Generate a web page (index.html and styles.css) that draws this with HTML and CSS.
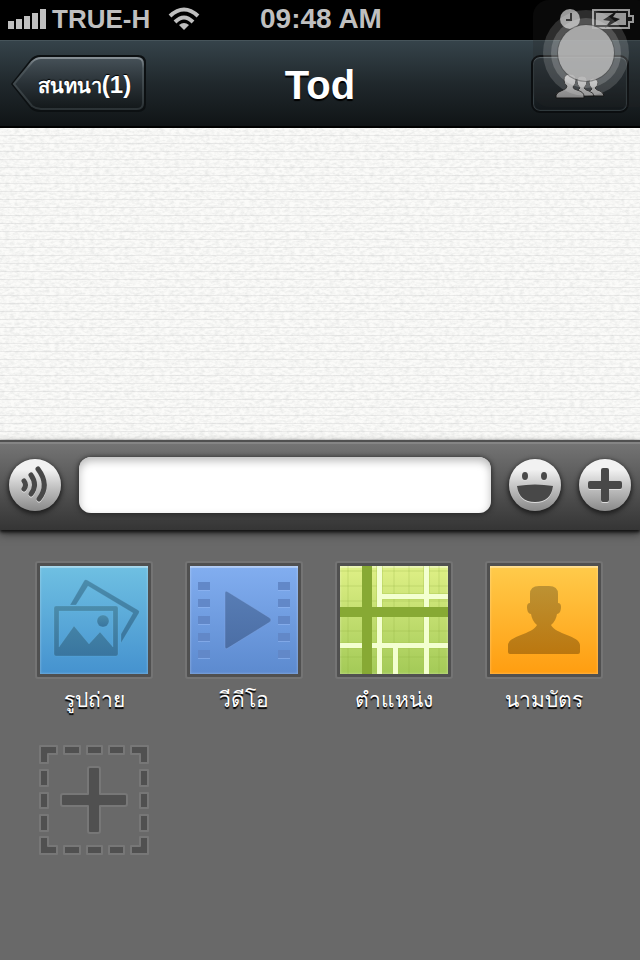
FILE: index.html
```
<!DOCTYPE html>
<html lang="th">
<head>
    <meta charset="UTF-8">
    <meta name="viewport" content="width=device-width, initial-scale=1.0">
    <title>Tod</title>
    <link rel="stylesheet" href="styles.css">
</head>
<body>
    <div class="status">
        <div class="status-left">
            <svg width="38" height="20" viewBox="0 0 38 20" fill="#bfbfbf">
                <path d="M0 12h6v8H0zM8 10h6v10H8zM16 7h6v13h-6zM24 4h6v16h-6zM32 0h6v20h-6z"/>
            </svg>
            <span class="carrier">TRUE-H</span>
            <svg class="wifi" width="32" height="24" viewBox="0 0 32 24" fill="none" stroke="#bfbfbf" stroke-width="4">
                <path d="M2 9Q16-4 30 9"/>
                <path d="M7 15Q16 6 25 15"/>
                <path d="M11 18Q16 14 21 18L16 23Z" fill="#bfbfbf" stroke="none"/>
            </svg>
        </div>
        <span class="time">09:48 AM</span>
        <div class="status-right">
            <svg width="20" height="20" viewBox="0 0 20 20">
                <circle cx="10" cy="10" r="10" fill="#bfbfbf"/>
                <path d="M11 4V11H6" fill="none" stroke="#111" stroke-width="2"/>
            </svg>
            <svg width="42" height="20" viewBox="0 0 42 20">
                <path d="M1 1H37V7H41V13H37V19H1Z" fill="#111" stroke="#bfbfbf" stroke-width="2"/>
                <path d="M4 4H34V16H4Z" fill="#bfbfbf"/>
                <path d="M26 1L11 11L18 12L13 19L28 10L21 8Z" fill="#111"/>
            </svg>
        </div>
    </div>

    <header class="header">
        <button class="back" type="button">
            <svg class="back-shape" width="135" height="58" viewBox="0 0 135 58">
                <defs>
                    <linearGradient id="backFill" x1="0" y1="0" x2="0" y2="1">
                        <stop offset="0" stop-color="#465158"/>
                        <stop offset="0.5" stop-color="#293136"/>
                        <stop offset="1" stop-color="#13181a"/>
                    </linearGradient>
                    <linearGradient id="backEdge" x1="0" y1="0" x2="0" y2="1">
                        <stop offset="0" stop-color="#879096"/>
                        <stop offset="0.2" stop-color="#4c565b"/>
                        <stop offset="1" stop-color="#2b3235"/>
                    </linearGradient>
                </defs>
                <path d="M0 29L19 5Q23 0 29 0H127Q135 0 135 8V49Q135 57 127 57H29Q23 57 19 53Z" fill="#0c1012"/>
                <path d="M3 29L21 7Q25 3 30 3H126Q132 3 132 9V48Q132 54 126 54H30Q25 54 21 51Z" fill="url(#backFill)" stroke="url(#backEdge)" stroke-width="2"/>
            </svg>
            <span class="back-text">สนทนา<span class="count">(1)</span></span>
        </button>
        <h1>Tod</h1>
        <button class="members" type="button" aria-label="สมาชิก">
            <svg width="50" height="26" viewBox="0 0 50 26">
                <defs>
                    <linearGradient id="person" x1="0" y1="0" x2="0" y2="1">
                        <stop offset="0" stop-color="#eee"/>
                        <stop offset="1" stop-color="#a5a5a5"/>
                    </linearGradient>
                </defs>
                <g fill="url(#person)" stroke="#111" stroke-width="1">
                    <path d="M33 23V20L37 16Q34 13 34 9Q34 5 38 5T43 9Q43 13 40 15Q41 17 45 18Q49 20 49 23Z"/>
                    <path d="M20 23V20L25 15Q22 12 22 8Q22 3 27 3T32 8Q32 12 29 15Q30 17 34 18Q39 20 39 23Z"/>
                    <path d="M1 25V22Q2 19 8 17Q12 16 12 13Q9 11 9 7Q9 1 15 1T21 7Q21 11 18 14Q18 16 22 17Q29 19 29 23V25Z"/>
                </g>
            </svg>
        </button>
    </header>

    <main class="chat">
        <svg class="paper" width="100%" height="100%">
            <filter id="grain" x="0" y="0" width="100%" height="100%">
                <feTurbulence type="fractalNoise" baseFrequency="0.2 0.4" numOctaves="4" seed="4"/>
                <feColorMatrix values="0 0 0 0 0.45  0 0 0 0 0.47  0 0 0 0 0.47  0.5 0 0 0 -0.18"/>
            </filter>
            <rect width="100%" height="100%" filter="url(#grain)"/>
        </svg>
    </main>

    <form class="toolbar">
        <button class="round" type="button" aria-label="เสียง">
            <svg width="52" height="52" viewBox="0 0 52 52" fill="none" stroke="#484848" stroke-width="5" stroke-linecap="round">
                <path d="M15 22Q18 26 15 30"/>
                <path d="M22 16Q29 26 22 35"/>
                <path d="M29 10Q41 26 30 40"/>
            </svg>
        </button>
        <input class="message" type="text" aria-label="ข้อความ">
        <button class="round" type="button" aria-label="อีโมติคอน">
            <svg width="52" height="52" viewBox="0 0 52 52" fill="#484848">
                <ellipse cx="16" cy="17" rx="3" ry="4"/>
                <ellipse cx="35" cy="17" rx="3" ry="4"/>
                <path d="M8 27Q26 24 44 27Q42 43 26 43T8 27Z"/>
            </svg>
        </button>
        <button class="round" type="button" aria-label="เพิ่ม">
            <svg width="52" height="52" viewBox="0 0 52 52" fill="#484848">
                <path d="M24 9H28Q30 9 30 11V22H41Q43 22 43 24V28Q43 30 41 30H30V41Q30 43 28 43H24Q22 43 22 41V30H11Q9 30 9 28V24Q9 22 11 22H22V11Q22 9 24 9Z"/>
            </svg>
        </button>
    </form>

    <section class="panel">
        <button class="item" type="button">
            <span class="tile photo">
                <svg width="108" height="108" viewBox="5 5 108 108">
                    <defs>
                        <linearGradient id="photoInk" x1="0" y1="0" x2="0" y2="1">
                            <stop offset="0" stop-color="#4b8cab"/>
                            <stop offset="1" stop-color="#39759f"/>
                        </linearGradient>
                    </defs>
                    <g fill="url(#photoInk)" stroke="#75bce4" stroke-opacity="0.2">
                        <path d="M35 44L49 20Q50 18 52 19L103 49Q105 50 104 52L86 82V73L98 52L53 25L41 44Z"/>
                        <path fill-rule="evenodd" d="M21 45H81Q83 45 83 47V93Q83 95 81 95H21Q19 95 19 93V47Q19 45 21 45ZM24 50V86L39 65L54 83L65 71L78 86V50Z"/>
                        <circle cx="68" cy="60" r="6"/>
                    </g>
                </svg>
            </span>
            <span class="label">รูปถ่าย</span>
        </button>
        <button class="item" type="button">
            <span class="tile video">
                <svg width="108" height="108" viewBox="5 5 108 108">
                    <defs>
                        <linearGradient id="videoInk" x1="0" y1="0" x2="0" y2="1">
                            <stop offset="0" stop-color="#587db5"/>
                            <stop offset="1" stop-color="#4b6ea5"/>
                        </linearGradient>
                    </defs>
                    <path d="M40 32Q40 29 43 31L85 57Q87 59 85 61L43 87Q40 89 40 86Z" fill="url(#videoInk)" stroke="#86acec" stroke-opacity="0.4"/>
                    <path d="M19 22V99M99 22V99" fill="none" stroke="#9abcf5" stroke-opacity="0.5" stroke-width="12" stroke-dasharray="8 9"/>
                    <path d="M19 21V98M99 21V98" fill="none" stroke="#6288c8" stroke-width="12" stroke-dasharray="8 9"/>
                </svg>
            </span>
            <span class="label">วีดีโอ</span>
        </button>
        <button class="item" type="button">
            <span class="tile map">
                <svg width="108" height="108" viewBox="5 5 108 108">
                    <path d="M13 5V113M28 5V113M59 5V113M74 5V113M104 5V113M5 10H113M5 25H113M5 40H113M5 70H113M5 96H113" stroke="#86ad3c" stroke-opacity="0.25"/>
                    <path d="M41 5H48V113H41ZM88 5H95V113H88ZM47 32H113V39H47ZM5 81H113V88H5ZM57 87H64V113H57Z" fill="#a9c952" fill-opacity="0.4"/>
                    <path d="M42 5H47V113H42ZM89 5H94V113H89ZM47 33H113V38H47ZM5 82H113V87H5ZM58 87H63V113H58Z" fill="#f3ffd0"/>
                    <path d="M27 5H37V46H113V56H37V113H27V56H5V46H27Z" fill="#87a934"/>
                </svg>
            </span>
            <span class="label">ตำแหน่ง</span>
        </button>
        <button class="item" type="button">
            <span class="tile card">
                <svg width="108" height="108" viewBox="5 5 108 108">
                    <defs>
                        <linearGradient id="cardInk" x1="0" y1="0" x2="0" y2="1">
                            <stop offset="0" stop-color="#bd9233"/>
                            <stop offset="1" stop-color="#bb770f"/>
                        </linearGradient>
                    </defs>
                    <path d="M23 91V84C23 75 48 73 52 64Q47 60 46 53C43 53 42 49 42 46Q42 42 45 42V33Q45 25 54 25H64Q73 25 73 33V42Q76 42 76 46C76 49 75 53 72 53Q71 60 66 64C70 73 95 75 95 84V91Q95 93 93 93H25Q23 93 23 91Z" fill="url(#cardInk)"/>
                </svg>
            </span>
            <span class="label">นามบัตร</span>
        </button>
        <button class="item" type="button" aria-label="เพิ่มรายการ">
            <svg width="118" height="118" viewBox="0 0 118 118" fill="#505050" stroke="#777" stroke-width="2" stroke-linejoin="round">
                <path d="M5 5H22V13H13V22H5ZM96 5H113V22H105V13H96ZM5 96H13V105H22V113H5ZM105 96H113V113H96V105H105Z"/>
                <path d="M29 5H45V13H29ZM52 5H67V13H52ZM74 5H89V13H74ZM29 105H45V113H29ZM52 105H67V113H52ZM74 105H89V113H74Z"/>
                <path d="M5 29H13V45H5ZM5 52H13V67H5ZM5 74H13V90H5ZM105 29H113V45H105ZM105 52H113V67H105ZM105 74H113V90H105Z"/>
                <path d="M55 26H63Q65 26 65 28V53H90Q92 53 92 55V63Q92 65 90 65H65V90Q65 92 63 92H55Q53 92 53 90V65H28Q26 65 26 63V55Q26 53 28 53H53V28Q53 26 55 26Z"/>
            </svg>
        </button>
    </section>

    <!-- floating touch button, sits over the status bar and header -->
    <svg class="touch" width="108" height="108" viewBox="0 0 108 108">
        <rect x="1" width="120" height="107" rx="16" fill="#222" fill-opacity="0.25"/>
        <circle cx="54" cy="53" r="43" fill="#fff" fill-opacity="0.15"/>
        <circle cx="54" cy="53" r="35" fill="#fff" fill-opacity="0.18"/>
        <circle cx="54" cy="53" r="29" fill="#444" fill-opacity="0.5"/>
        <circle cx="54" cy="53" r="28" fill="#cecece" fill-opacity="0.7"/>
    </svg>
</body>
</html>
```
FILE: styles.css
```
* {
    box-sizing: border-box;
}
body {
    margin: 0;
    min-height: 100vh;
    display: flex;
    flex-direction: column;
    position: relative;
    background: #696969;
    color: white;
    font-family: "Liberation Sans", Arial, sans-serif;
}
button {
    padding: 0;
    border: none;
    background: none;
    color: white;
    font-family: inherit;
    cursor: pointer;
}
svg {
    display: block;
}

/* status bar */
.status {
    display: grid;
    grid-template-columns: 1fr auto 1fr;
    align-items: center;
    height: 40px;
    padding: 0 6px 2px 8px;
    background: #000;
    color: #bfbfbf;
    font-weight: bold;
}
.status-left, .status-right {
    display: flex;
    align-items: center;
    gap: 6px;
}
.status-right {
    justify-content: flex-end;
    gap: 12px;
}
.carrier {
    font-size: 26px;
}
.wifi {
    margin-left: 12px;
}
.time {
    font-size: 28px;
}

/* header */
.header {
    display: grid;
    grid-template-columns: 1fr auto 1fr;
    align-items: center;
    height: 88px;
    padding: 0 11px;
    background: linear-gradient(#35434a, #20282c 50%, #101416);
    border-top: 1px solid #46545a;
    border-bottom: 2px solid #000;
}
.header h1 {
    margin: 0;
    padding-top: 4px;
    font-size: 40px;
    text-shadow: 0 2px 1px #000;
}
.back {
    position: relative;
    justify-self: start;
    width: 135px;
    height: 58px;
}
.back-shape {
    position: absolute;
    top: 0;
    left: 0;
}
.back-text {
    position: relative;
    display: block;
    padding: 4px 0 0 12px;
    font-size: 20px;
    font-weight: bold;
    line-height: 32px;
    white-space: nowrap;
    text-shadow: 0 -1px 1px #000;
}
.count {
    font-size: 24px;
}
.members {
    display: flex;
    justify-content: center;
    align-items: center;
    justify-self: end;
    width: 98px;
    height: 58px;
    padding-top: 4px;
    border: 2px solid #0b0e10;
    border-radius: 9px;
    background: linear-gradient(#303a40, #12171a);
    box-shadow: inset 0 1px 1px #69757b, inset 0 0 1px 1px #343d41;
}

/* chat */
.chat {
    position: relative;
    height: 312px;
    background: repeating-linear-gradient(#fbfbf9 0, #fbfbf9 7px, #ebebea 7px, #ebebea 8px);
}
.paper {
    position: absolute;
    top: 0;
    left: 0;
}

/* message bar */
.toolbar {
    display: flex;
    align-items: center;
    gap: 18px;
    position: relative;
    height: 90px;
    padding: 0 9px 2px;
    border-top: 2px solid #505050;
    background: linear-gradient(#757575, #353535);
    box-shadow: inset 0 2px 0 #858585, 0 2px 3px #111, 0 4px 8px #333;
}
.round {
    flex: none;
    width: 52px;
    height: 52px;
    border-radius: 50%;
    background: linear-gradient(#f2f2f2 20%, #c8c8c8 50%, #898989);
    box-shadow: 0 2px 5px 1px #1c1c1c;
}
.round svg {
    filter: drop-shadow(0 1px 0 #ddd);
}
.message {
    flex: 1;
    min-width: 0;
    height: 56px;
    padding: 0 14px;
    border: none;
    border-radius: 12px;
    background: white;
    font-size: 28px;
    box-shadow: inset 0 4px 8px #bbb, 0 1px 5px 1px #2a2a2a;
}

/* attachments */
.panel {
    flex: 1;
    display: grid;
    grid-template-columns: repeat(4, 1fr);
    align-content: start;
    row-gap: 21px;
    padding: 31px 21px 20px 19px;
}
.item {
    display: flex;
    flex-direction: column;
    align-items: center;
}
.tile {
    padding: 3px;
    border: 2px solid #747474;
    border-radius: 3px;
    background: #505050;
}
.tile svg {
    box-shadow: inset 0 2px 0 rgba(255, 255, 255, 0.3), inset 0 0 2px 1px rgba(255, 255, 255, 0.2);
}
.photo svg {
    background: linear-gradient(#6fc0e2, #4592cf);
}
.video svg {
    background: linear-gradient(#82aef0, #5c8acf);
}
.map svg {
    background: linear-gradient(#dff086, #a3ca57);
}
.card svg {
    background: linear-gradient(#ffcb4b, #ff9d10);
}
.label {
    height: 41px;
    padding-top: 1px;
    font-size: 21px;
    line-height: 40px;
    white-space: nowrap;
    text-shadow: 0 2px 1px #000;
}

.touch {
    position: absolute;
    top: 0;
    right: 0;
}
```
